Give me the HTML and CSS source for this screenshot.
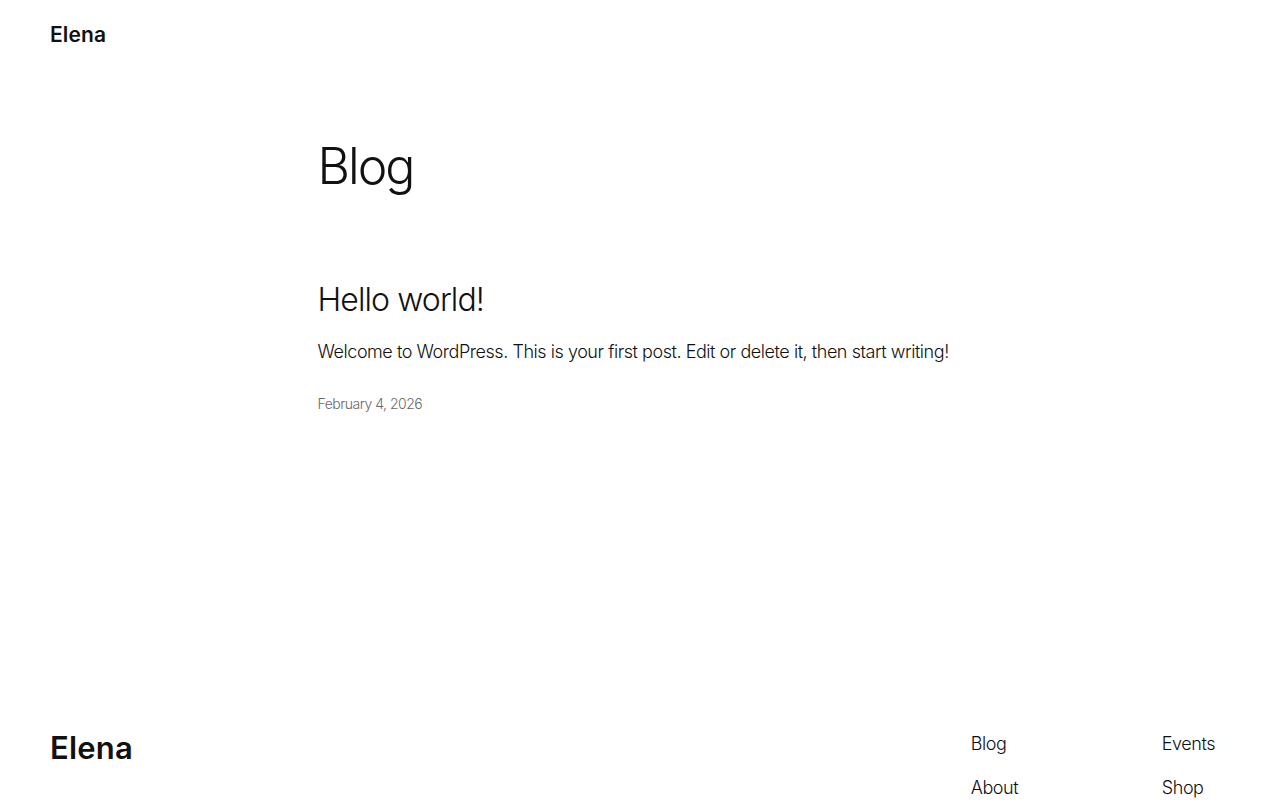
FILE: index.html
```html
<!DOCTYPE html>
<html lang="en">
<head>
<meta charset="utf-8">
<title>Blog – Elena</title>
<link rel="stylesheet" href="styles.css">
</head>
<body>
<div class="page">
  <header class="site-header">
    <a class="site-title" href="#">Elena</a>
  </header>
  <main class="main">
    <h1 class="archive-title">Blog</h1>
    <article class="post">
      <h2 class="post-title"><a href="#">Hello world!</a></h2>
      <p class="post-excerpt">Welcome to WordPress. This is your first post. Edit or delete it, then start writing!</p>
      <time class="post-date">February 4, 2026</time>
    </article>
  </main>
  <footer class="site-footer">
    <a class="footer-title" href="#">Elena</a>
    <nav class="footer-nav">
      <ul class="nav-col nav-col-1">
        <li><a href="#">Blog</a></li>
        <li><a href="#">About</a></li>
      </ul>
      <ul class="nav-col nav-col-2">
        <li><a href="#">Events</a></li>
        <li><a href="#">Shop</a></li>
      </ul>
    </nav>
  </footer>
</div>
</body>
</html>
```
FILE: styles.css
```css
* { box-sizing: border-box; }
html, body { margin: 0; padding: 0; }
body {
  background: #fff;
  color: #111;
  font-family: Inter, "Noto Sans", sans-serif;
  font-weight: 300;
  -webkit-font-smoothing: antialiased;
}
a { color: inherit; text-decoration: none; }
.page {
  display: flex;
  flex-direction: column;
}
.site-header {
  padding: 22px 50px 0;
  height: 70px;
}
.site-title {
  font-size: 21px;
  font-weight: 600;
  letter-spacing: 0.1px;
  line-height: 26px;
}
.main {
  width: 645px;
  margin: 0 auto;
  height: 660px;
}
.archive-title {
  margin: 64px 0 0;
  font-size: 50px;
  font-weight: 300;
  letter-spacing: -2px;
  line-height: 64px;
}
.post { margin-top: 83px; }
.post-title {
  margin: 0;
  font-size: 32px;
  font-weight: 300;
  letter-spacing: -0.9px;
  line-height: 38px;
}
.post-excerpt {
  margin: 20px 0 0;
  font-size: 18px;
  letter-spacing: -0.45px;
  line-height: 26px;
}
.post-date {
  display: block;
  margin-top: 29px;
  font-size: 14px;
  color: #686868;
  letter-spacing: -0.5px;
  line-height: 20px;
}
.site-footer {
  display: flex;
  justify-content: space-between;
  align-items: flex-start;
  padding: 0 65px 40px 50px;
}
.footer-title {
  font-size: 31px;
  font-weight: 600;
  letter-spacing: 0.2px;
  line-height: 32px;
  margin-top: 2px;
}
.footer-nav {
  display: flex;
  margin-top: 1px;
}
.nav-col {
  list-style: none;
  margin: 0;
  padding: 0;
  display: flex;
  flex-direction: column;
  gap: 18px;
  font-size: 18px;
  letter-spacing: -0.45px;
  line-height: 26px;
}
.nav-col-1 { width: 191px; }
```
